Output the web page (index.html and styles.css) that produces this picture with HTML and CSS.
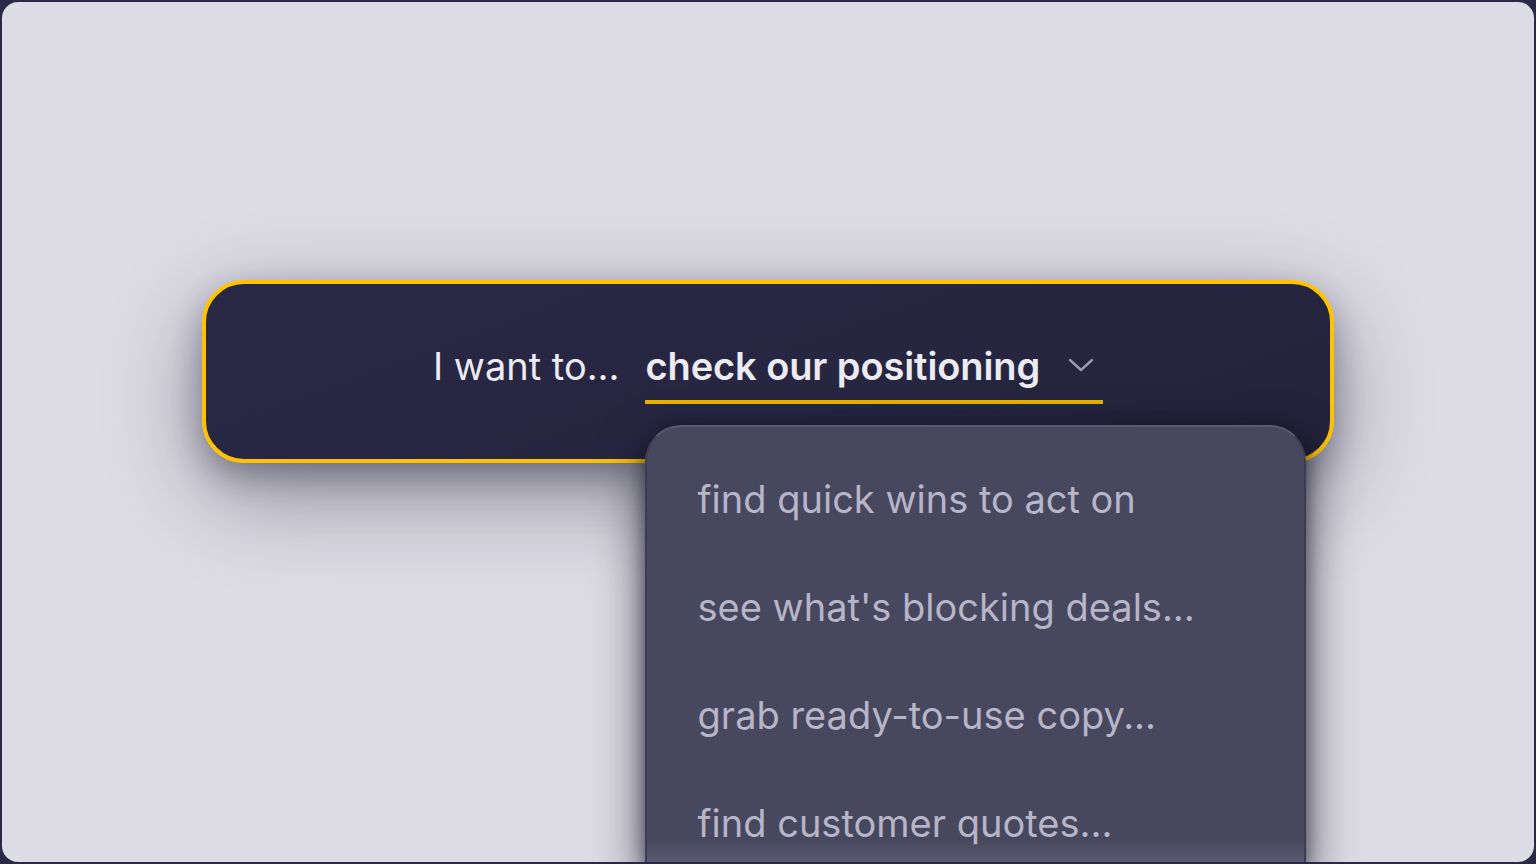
FILE: index.html
```html
<!DOCTYPE html>
<html lang="en">
<head>
<meta charset="utf-8">
<title>Intent picker</title>
<link rel="stylesheet" href="styles.css">
</head>
<body>
<div class="app">
  <div class="card">
    <div class="prompt">
      <span class="lead">I want to...</span>
      <div class="select">
        <button class="select-btn" type="button">
          <span class="value">check our positioning</span>
          <svg class="chev" width="26" height="16" viewBox="0 0 26 16" aria-hidden="true"><path d="M2 3 L13 13 L24 3" fill="none" stroke="currentColor" stroke-width="2.4" stroke-linecap="round" stroke-linejoin="round"/></svg>
        </button>
        <ul class="menu">
          <li class="item">find quick wins to act on</li>
          <li class="item">see what's blocking deals...</li>
          <li class="item">grab ready-to-use copy...</li>
          <li class="item">find customer quotes...</li>
        </ul>
      </div>
    </div>
  </div>
</div>
</body>
</html>
```

FILE: styles.css
```css
* { box-sizing: border-box; }
html, body { margin: 0; padding: 0; }
body {
  background: #2a2a46;
  width: 1536px;
  height: 864px;
  overflow: hidden;
  padding: 2px;
  font-family: Inter, "Noto Sans", sans-serif;
}
.app {
  height: 860px;
  border-radius: 16px;
  background: #dddbe4;
  overflow: hidden;
  padding-top: 278px;
  display: flex;
  flex-direction: column;
  align-items: center;
}
.card {
  width: 1132px;
  height: 183px;
  flex: none;
  border: 4px solid #ffc200;
  border-radius: 42px;
  background: linear-gradient(160deg, #282845 0%, #262641 60%, #22223a 100%);
  box-shadow: 0 30px 90px rgba(20, 20, 40, 0.42), 0 12px 30px rgba(20, 20, 40, 0.3);
  display: flex;
  justify-content: center;
  padding-top: 54px;
}
.prompt {
  display: flex;
  align-items: flex-start;
  gap: 25px;
}
.lead {
  color: #ecebf2;
  font-size: 38px;
  line-height: 56px;
  font-weight: 400;
}
.select { position: relative; }
.select-btn {
  display: flex;
  align-items: flex-start;
  gap: 28px;
  background: none;
  border: 0;
  border-bottom: 4px solid #e8b300;
  padding: 0 9px 0 1px;
  height: 66px;
  font: inherit;
  color: #ecebf2;
  cursor: pointer;
}
.value {
  font-size: 38px;
  line-height: 56px;
  font-weight: 600;
  letter-spacing: -0.1px;
}
.chev { color: #9b99ae; margin-top: 19px; }
.menu {
  position: absolute;
  left: 0;
  top: 87px;
  width: 661px;
  height: 440px;
  margin: 0;
  padding: 18px 0 0 51px;
  list-style: none;
  background: linear-gradient(180deg, #47475e 0%, #47475e calc(100% - 22px), #5c5b73 100%);
  border: 2px solid #3d3c52;
  border-top-color: #5a596f;
  border-radius: 36px 36px 0 0;
  box-shadow: 0 20px 50px rgba(10, 10, 25, 0.7), 0 4px 16px rgba(10, 10, 25, 0.45);
}
.item {
  color: #b7b5c8;
  font-size: 38px;
  line-height: 108px;
  height: 108px;
  font-weight: 400;
  white-space: nowrap;
}
```
